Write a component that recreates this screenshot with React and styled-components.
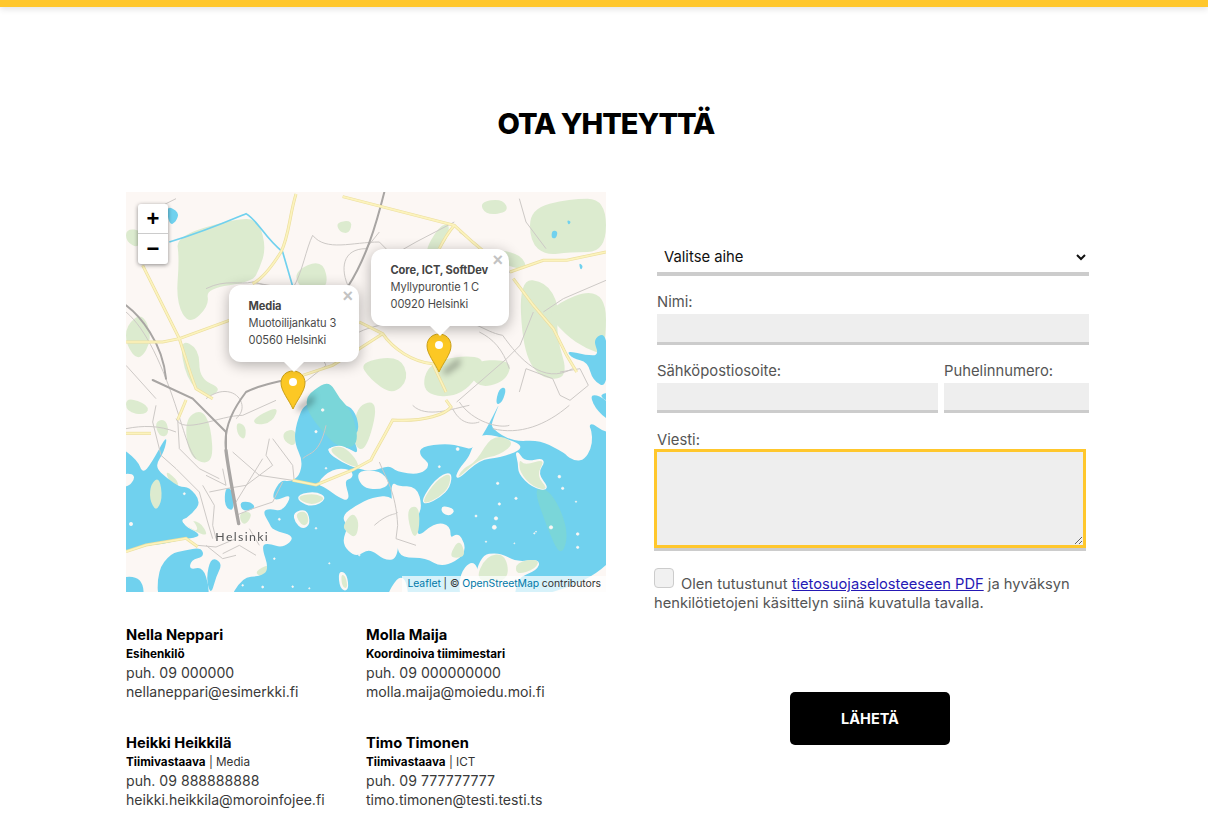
import React from 'react';
import styled, { createGlobalStyle } from 'styled-components';

const GlobalStyle = createGlobalStyle`
  * { box-sizing: border-box; }
  html, body { margin: 0; padding: 0; background: #fff; }
  body { font-family: Inter, "Liberation Sans", sans-serif; color: #4a4a4a; }
`;

const TopBar = styled.div`
  height: 7px;
  background: #ffc72c;
  box-shadow: 0 2px 6px rgba(0, 0, 0, 0.12);
`;

const Page = styled.main`
  width: 963px;
  margin-left: 126px;
`;

const Title = styled.h1`
  margin: 98px 0 49px;
  width: 960px;
  text-align: center;
  font-size: 29px;
  line-height: 38px;
  font-weight: 800;
  letter-spacing: -1px;
  color: #000;
`;

const Columns = styled.div`
  display: grid;
  grid-template-columns: 480px 435px;
  column-gap: 48px;
`;

const MapBox = styled.div`
  position: relative;
  width: 480px;
  height: 400px;
  overflow: hidden;
  background: #fcf7f4;
`;

const MapArt = styled.svg`
  display: block;
  width: 480px;
  height: 400px;
  filter: blur(0.35px);
`;

const Zoom = styled.div`
  position: absolute;
  left: 12px;
  top: 12px;
  width: 30px;
  border-radius: 3px;
  background: #fff;
  box-shadow: 0 1px 4px rgba(0, 0, 0, 0.45);
`;

const ZoomBtn = styled.div`
  height: 30px;
  display: flex;
  align-items: center;
  justify-content: center;
  font: bold 22px "Liberation Sans", sans-serif;
  color: #000;
  border-bottom: ${p => (p.$last ? 'none' : '1px solid #ccc')};
`;

const Popup = styled.div`
  position: absolute;
  left: ${p => p.$x}px;
  top: ${p => p.$y}px;
  width: ${p => p.$w}px;
  height: 77px;
  padding: 13px 0 0 19.5px;
  background: #fff;
  border-radius: 12px;
  box-shadow: 0 3px 14px rgba(0, 0, 0, 0.3);
  font-size: 11.1px;
  line-height: 17px;
  color: #4a4a4a;
  letter-spacing: -0.1px;
  &::after {
    content: '';
    position: absolute;
    left: 50%;
    bottom: -10px;
    margin-left: -11px;
    border-left: 11px solid transparent;
    border-right: 11px solid transparent;
    border-top: 11px solid #fff;
  }
`;

const PopupName = styled.b`
  display: block;
  font-weight: 700;
  color: #444;
`;

const PopupClose = styled.span`
  position: absolute;
  top: 3px;
  right: 6px;
  font: bold 18px/17px "Liberation Sans", sans-serif;
  color: #c3c3c3;
`;

const Pin = styled.svg`
  position: absolute;
  left: ${p => p.$x}px;
  top: ${p => p.$y}px;
  overflow: visible;
`;

const Attribution = styled.div`
  position: absolute;
  right: 0;
  bottom: 0;
  padding: 0 5px;
  height: 16px;
  background: rgba(255, 255, 255, 0.72);
  font-size: 10.4px;
  line-height: 16px;
  color: #333;
  letter-spacing: -0.05px;
  white-space: nowrap;
`;

const MapLink = styled.span`
  color: #0078a8;
`;

const Contacts = styled.div`
  display: grid;
  grid-template-columns: 240px 240px;
  grid-auto-rows: 108px;
  margin-top: 34px;
`;

const Contact = styled.div`
  font-size: 14.1px;
  line-height: 19px;
  color: #3a3a3a;
`;

const Name = styled.div`
  font-size: 14.7px;
  line-height: 18px;
  font-weight: 700;
  color: #000;
`;

const Role = styled.div`
  font-size: 11.7px;
  line-height: 19px;
  padding-top: 1px;
  margin-bottom: -1px;
  color: #333;
  b { font-weight: 700; color: #000; }
`;

const Form = styled.form`
  padding-top: 46px;
`;

const Select = styled.select`
  display: block;
  width: 432px;
  height: 38px;
  margin-left: 3px;
  padding: 4px 3px 0;
  border: none;
  border-bottom: 4px solid #ccc;
  background: #fff;
  font: 14.8px Inter, sans-serif;
  color: #111;
`;

const Label = styled.label`
  display: block;
  font-size: 14.8px;
  line-height: 18px;
  color: #555;
  margin-left: 3px;
`;

const Field = styled.div`
  margin-top: ${p => p.$top || 0}px;
  width: ${p => (p.$w ? `${p.$w}px` : 'auto')};
`;

const Input = styled.input`
  display: block;
  width: ${p => (p.$wide ? '432px' : '100%')};
  margin: 3px 0 0 3px;
  height: ${p => p.$h}px;
  padding: 0 8px;
  border: none;
  border-bottom: 3px solid #ccc;
  background: #eee;
  outline: none;
`;

const Pair = styled.div`
  display: flex;
  gap: 6px;
  margin-top: 17px;
`;

const Message = styled.textarea`
  display: block;
  width: 432px;
  height: 99px;
  margin: 0;
  padding: 6px;
  border: 3px solid #ffc72c;
  background: #eee;
  box-shadow: 0 3px 0 #ccc;
  outline: none;
`;

const Consent = styled.p`
  margin: 20px 0 0;
  width: 425px;
  font-size: 14.7px;
  line-height: 19px;
  color: #555;
  a { color: #2518b5; text-decoration: underline; }
`;

const Check = styled.input`
  appearance: none;
  width: 20px;
  height: 20px;
  margin: 0 7px 0 0;
  vertical-align: 1px;
  background: #f1f1f1;
  border: 1px solid #ccc;
  border-radius: 4px;
`;

const SendRow = styled.div`
  display: flex;
  justify-content: center;
  margin-top: 79px;
  width: 432px;
`;

const Send = styled.button`
  width: 160px;
  height: 53px;
  border: none;
  border-radius: 5px;
  background: #000;
  color: #fff;
  font: 700 14.5px Inter, sans-serif;
`;

// rounds a point list into a soft outline, coastlines look too sharp otherwise
const smooth = pts => {
  const n = pts.match(/-?\d+(\.\d+)?/g).map(Number);
  const p = [];
  for (let i = 0; i < n.length; i += 2) p.push([n[i], n[i + 1]]);
  const mid = (a, b) => `${(a[0] + b[0]) / 2} ${(a[1] + b[1]) / 2}`;
  let d = `M${mid(p[p.length - 1], p[0])}`;
  p.forEach((pt, i) => {
    d += ` Q${pt[0]} ${pt[1]} ${mid(pt, p[(i + 1) % p.length])}`;
  });
  return d + 'Z';
};

/* all map shapes are in 3x pixels, viewBox is 1440x1200 */
const SEA = [
  '-30 755 35 805 50 845 75 815 125 725 115 779 85 824 125 860 160 885 190 885 225 929 200 964 160 994 235 1032 170 1042 110 1056 50 1062 -30 1085',
  '-30 1154 50 1154 55 1240 -30 1240',
  '95 1134 135 1084 175 1076 225 1066 235 1094 195 1104 190 1134 230 1124 250 1184 245 1240 95 1240',
  '255 1094 290 1114 270 1154 255 1210 240 1160',
  '298 884 320 894 325 959 295 944',
  '340 929 375 929 390 949 350 959',
  '540 624 510 694 505 754 530 804 520 854 490 869 465 864 440 904 445 929 500 904 470 959 430 949 410 959 430 994 440 1014 510 1034 470 1069 430 1054 405 1059 430 1134 400 1154 350 1154 300 1240 1500 1240 1500 724 1440 724 1385 684 1400 754 1365 814 1300 774 1240 744 1160 749 1095 709 1100 684 1125 624 1080 714 1040 774 1010 764 960 754 885 764 880 789 915 819 880 849 810 839 790 819 740 839 690 829 640 804 600 774 620 764 660 764 700 789 680 734 700 714 690 664 660 634',
  '1390 610 1420 610 1470 650 1470 700 1415 660',
];

const TEAL = [
  '540 620 560 596 610 565 640 620 680 660 700 760 640 770 590 720 545 660',
  '1220 880 1280 900 1330 1020 1305 1100 1260 1000',
];

const ISLANDS = [
  '800 874 815 886 870 886 885 944 870 974 870 1044 930 994 970 1004 970 1044 1000 1024 1020 1084 950 1124 900 1094 830 1094 815 1064 800 924',
  '700 839 760 839 790 874 760 889 720 886 700 864',
  '650 974 690 944 740 919 800 914 812 974 815 1094 780 1104 730 1064 690 1094 650 1054 670 1004',
  '520 909 570 902 600 919 560 942 520 926',
  '505 964 540 954 550 994 530 1009 510 989',
  '600 774 650 759 690 799 700 829 650 809',
  '575 874 620 834 670 834 680 854 650 864 670 924 640 914 600 884',
  '1040 774 1060 724 1160 749 1190 769 1120 794 1060 799 990 864 1000 834 1030 799',
  '1170 774 1195 814 1260 799 1230 844 1270 894 1220 884 1180 844 1180 814',
  '890 924 930 864 975 839 970 884 940 914 900 934',
  '950 944 985 954 970 969 950 959',
  '1040 1240 1060 1094 1120 1084 1170 1114 1240 1104 1230 1134 1170 1154 1160 1240',
  '1000 1154 1040 1104 1060 1154 1040 1240 1010 1240',
  '770 1240 830 1134 850 1240',
  '640 1139 660 1149 665 1194 645 1189',
  '1300 674 1385 684 1400 754 1365 814 1300 774',
  '-20 849 30 849 0 889',
  '165 985 195 980 215 1015 195 1005',
];

const SPECKS = [
  [995, 771, 9], [940, 824, 6], [1115, 874, 7], [1120, 936, 7], [1170, 919, 7], [1310, 889, 7],
  [1105, 1006, 12], [1050, 972, 6], [1110, 979, 10], [1275, 1006, 10], [1355, 1026, 8], [1355, 1066, 7],
  [1225, 1024, 4], [965, 956, 11], [570, 719, 7], [600, 829, 5], [590, 654, 8], [175, 905, 6],
  [460, 982, 6], [1080, 1049, 4], [1300, 854, 8], [550, 1189, 4], [610, 1114, 4], [700, 1089, 5],
  [1165, 1054, 3], [1230, 1019, 3], [1350, 929, 4], [570, 1009, 5], [500, 1184, 5], [15, 996, 10],
  [350, 1180, 5], [410, 1185, 6], [445, 1100, 5],
];

const LAND_GREENS = [
  '150 130 350 75 400 90 420 170 400 230 380 270 240 290 250 340 190 400 150 330 160 200',
  '1212 50 1330 20 1440 20 1440 180 1330 180 1260 190 1212 150',
  '0 110 50 115 40 170 0 150',
  '1060 170 1180 180 1210 240 1110 210',
  '700 510 820 490 850 560 800 610 730 560',
  '1180 260 1260 270 1300 340 1290 430 1330 560 1240 560 1190 470',
  '1250 350 1440 275 1440 490 1380 470 1320 430',
  '160 440 220 470 220 560 290 590 240 620 180 560',
  '1020 510 1160 500 1140 570 1050 590',
  '630 90 680 85 670 125 640 120',
  '900 520 1000 490 1090 500 1010 615 890 610',
  '0 400 50 360 80 440 40 510 0 460',
  '500 240 590 200 610 290 530 300',
  '890 190 940 100 975 95 955 165',
  '1060 30 1130 20 1150 60 1080 70',
  '690 640 760 625 720 780 680 760',
  '175 684 225 650 255 700 262 820 190 800',
  '85 690 120 680 130 730 100 735',
  '0 614 70 640 60 670 0 660',
  '380 680 460 640 440 690 390 700',
  '330 690 360 700 358 745 335 730',
  '120 835 160 870 150 890 125 860',
  '340 960 380 960 365 995 345 995',
  '385 1140 430 1115 430 1140 405 1155',
  '470 720 510 710 510 765 475 750',
  '1310 690 1395 740 1370 800 1310 770',
  '170 990 220 985 250 1035 200 1015',
];

const ISLAND_GREENS = [
  '75 875 100 855 110 920 90 960 70 920',
  '605 770 650 760 690 800 700 830 650 810',
  '520 910 570 905 600 920 560 940 520 925',
  '505 965 540 955 550 990 530 1005',
  '890 925 930 865 975 840 970 885 940 915 900 935',
  '650 1000 680 960 700 990 690 1040 660 1020',
  '840 950 880 940 880 1020 860 1040',
  '970 1090 1000 1040 1020 1090 990 1100',
  '1045 1170 1080 1090 1140 1085 1150 1170',
  '1170 1110 1240 1100 1230 1130 1170 1150',
  '1180 800 1195 820 1260 800 1230 850 1270 895 1220 885 1180 840',
  '1050 810 1100 725 1170 750 1120 790 1060 800 990 865 1010 830',
  '645 1145 660 1155 665 1190 648 1185',
];

const PONDS = [
  '120 40 160 60 150 90 130 100',
  '1278 115 1296 118 1290 140 1276 138',
  '1322 84 1336 88 1328 100',
  '1358 212 1372 222 1364 236',
  '1400 440 1445 420 1445 590 1400 565 1385 510 1340 500 1320 475 1380 490 1420 490',
  '1118 590 1142 585 1130 630 1108 640',
  '1420 610 1445 600 1445 630',
];

const ROADS = [
  'M0 360 C60 410 110 520 155 660 C175 720 190 780 210 800',
  'M240 290 C300 260 340 280 380 270 C460 290 500 280 560 320',
  'M560 130 C600 180 680 150 760 150 L800 190 L870 150 L985 90',
  'M670 290 C640 230 650 170 720 170 L760 120',
  'M960 400 C1040 370 1070 420 1130 430 C1180 500 1250 580 1340 530',
  'M1252 360 L1312 320 L1440 265',
  'M1222 360 L1182 460 L1142 500 L992 630',
  'M1302 540 L1362 530 L1387 580 L1332 625 L1302 610 L1280 560 L1200 530 L1180 600',
  'M1000 120 C1070 170 1130 250 1160 240',
  'M0 520 L90 620',
  'M240 620 C320 560 380 640 330 680',
  'M380 270 L500 300 L540 400 L600 520 L500 600',
  'M700 420 C760 390 880 380 960 400',
  'M1060 420 C1100 440 1130 470 1150 530',
  'M560 130 C540 170 530 240 500 290 M540 400 L640 470 L700 420',
  'M150 680 C170 730 280 670 350 670 L450 625 M155 680 L160 770 L220 830 L280 860',
  'M90 640 L80 690 L105 790 L150 830 L220 900 L245 990 L260 1040',
  'M440 740 L500 820 L505 870 M430 740 L420 790 L440 820 L360 880 L300 890 L250 900',
  'M320 780 L400 850 L500 865 M240 850 L300 880 M230 880 L265 940 L260 1000 L270 1040',
  'M470 870 L440 930 L380 950 L330 970 M330 930 L410 800 M290 830 L300 880',
  'M0 710 C50 700 100 700 150 720',
  'M1100 710 C1180 730 1260 700 1330 640 M1000 630 C1040 690 1120 710 1150 700',
  'M760 810 C780 860 810 900 815 1000 L810 1040 L870 1060 M745 1000 C790 960 810 970 815 960',
  'M980 650 C1000 690 1030 700 1060 690 M215 1060 L270 1065 L330 1040 M240 1060 L290 1100 L330 1090',
  'M860 640 C900 680 980 650 1030 640 M600 700 C580 790 550 780 530 800',
  'M800 190 C790 280 830 300 880 280 M60 60 L110 40 L150 20 M1180 20 L1200 90 L1260 170',
  'M290 1085 L340 1060 L390 1090 M370 1010 L400 1060',
];

const MOTORWAYS = [
  'M510 6 C490 70 490 130 465 180 C440 220 410 260 380 275',
  'M650 14 L790 50 L985 100 L1040 150 L1070 175',
  'M985 100 C960 130 950 150 940 170',
  'M0 450 L110 450 L160 440 L310 385',
  'M50 220 C100 320 130 380 160 440 C180 500 190 540 210 590 L260 620',
  'M1152 240 L1252 205 L1322 205 L1440 180',
  'M1162 260 L1222 340 L1282 410 L1322 490 L1352 540',
  'M700 390 L770 425 C800 470 860 510 920 515 L960 600',
  'M770 425 L700 470 L620 520 L530 550',
  'M960 624 L975 645 C960 665 900 690 800 684 C760 760 740 790 735 804 L680 834 L570 879 L500 865',
  'M0 1079 L60 1059 L180 1039 L215 1064',
  'M155 684 L180 624',
  'M0 724 L75 724',
];

const RAILS = [
  'M775 0 C750 100 720 200 665 285',
  'M300 775 C305 820 320 900 338 995',
  'M300 775 C290 700 330 640 360 600 C400 580 450 570 520 555',
  'M80 564 L200 620 L300 720 L300 775',
  'M0 340 C40 370 110 450 120 560',
];

const MapPicture = () => (
  <MapArt viewBox="0 0 1440 1200" aria-hidden="true">
    <rect width="1440" height="1200" fill="#fcf7f4" />
    <g fill="#dcebcf">
      {LAND_GREENS.map((d, i) => <path key={i} d={smooth(d)} />)}
    </g>
    <g fill="#70d1ee">
      {SEA.map((d, i) => <path key={i} d={smooth(d)} />)}
    </g>
    <g fill="#7ad6d9">
      {TEAL.map((d, i) => <path key={i} d={smooth(d)} />)}
    </g>
    <g fill="#fcf7f4" stroke="#fcf7f4" strokeWidth="7" strokeLinejoin="round">
      {ISLANDS.map((d, i) => <path key={i} d={smooth(d)} />)}
      {SPECKS.map(([x, y, r], i) => <circle key={i} cx={x} cy={y} r={r * 0.5} strokeWidth="2" />)}
    </g>
    <g fill="#dcebcf">
      {ISLAND_GREENS.map((d, i) => <path key={i} d={smooth(d)} />)}
    </g>
    <g fill="#70d1ee">
      {PONDS.map((d, i) => <path key={i} d={smooth(d)} />)}
    </g>
    <path d="M130 150 C230 120 300 90 360 65 C400 90 410 130 470 180 L505 300" fill="none" stroke="#70d1ee" strokeWidth="5" />
    <g fill="none" stroke="#cdc9c6" strokeWidth="3">
      {ROADS.map((d, i) => <path key={i} d={d} />)}
    </g>
    <g fill="none" stroke="#a8a5a3" strokeLinecap="round">
      {RAILS.map((d, i) => <path key={i} d={d} strokeWidth={i === 1 ? 10 : 6} />)}
    </g>
    <g fill="none" stroke="#ecdf9f" strokeWidth="9">
      {MOTORWAYS.map((d, i) => <path key={i} d={d} />)}
    </g>
    <g fill="none" stroke="#fcf3bd" strokeWidth="5">
      {MOTORWAYS.map((d, i) => <path key={i} d={d} />)}
    </g>
    <text x="268" y="1048" fontFamily="Lato, sans-serif" fontSize="37" letterSpacing="4" fill="#555" stroke="#fff" strokeWidth="1" paintOrder="stroke">Helsinki</text>
  </MapArt>
);

const Marker = ({ x, y }) => (
  <Pin $x={x} $y={y} width="26" height="40" viewBox="0 0 26 40">
    <path d="M16 38 L34 24 L34 32 L20 42Z" fill="rgba(0,0,0,0.3)" style={{ filter: 'blur(3px)' }} />
    <path d="M13 1 C6 1 1 6 1 13 C1 21 9 30 13 39 C17 30 25 21 25 13 C25 6 20 1 13 1Z" fill="#fcc824" stroke="#caa017" strokeWidth="1" />
    <circle cx="13" cy="12" r="4" fill="#fff" />
  </Pin>
);

const people = [
  { name: 'Nella Neppari', role: 'Esihenkilö', phone: 'puh. 09 000000', mail: 'nellaneppari@esimerkki.fi' },
  { name: 'Molla Maija', role: 'Koordinoiva tiimimestari', phone: 'puh. 09 000000000', mail: 'molla.maija@moiedu.moi.fi' },
  { name: 'Heikki Heikkilä', role: 'Tiimivastaava', team: 'Media', phone: 'puh. 09 888888888', mail: 'heikki.heikkila@moroinfojee.fi' },
  { name: 'Timo Timonen', role: 'Tiimivastaava', team: 'ICT', phone: 'puh. 09 777777777', mail: 'timo.timonen@testi.testi.ts' },
];

export default function App() {
  return (
    <>
      <GlobalStyle />
      <TopBar />
      <Page>
        <Title>OTA YHTEYTTÄ</Title>
        <Columns>
          <div>
            <MapBox>
              <MapPicture />
              <Zoom>
                <ZoomBtn>+</ZoomBtn>
                <ZoomBtn $last>−</ZoomBtn>
              </Zoom>
              <Marker x={154} y={178} />
              <Marker x={300} y={141} />
              <Popup $x={103} $y={93} $w={130}>
                <PopupClose>×</PopupClose>
                <PopupName>Media</PopupName>
                Muotoilijankatu 3<br />
                00560 Helsinki
              </Popup>
              <Popup $x={245} $y={57} $w={138}>
                <PopupClose>×</PopupClose>
                <PopupName>Core, ICT, SoftDev</PopupName>
                Myllypurontie 1 C<br />
                00920 Helsinki
              </Popup>
              <Attribution>
                <MapLink>Leaflet</MapLink> | © <MapLink>OpenStreetMap</MapLink> contributors
              </Attribution>
            </MapBox>
            <Contacts>
              {people.map(p => (
                <Contact key={p.name}>
                  <Name>{p.name}</Name>
                  <Role>
                    <b>{p.role}</b>
                    {p.team ? ` | ${p.team}` : ''}
                  </Role>
                  <div>{p.phone}</div>
                  <div>{p.mail}</div>
                </Contact>
              ))}
            </Contacts>
          </div>
          <Form onSubmit={e => e.preventDefault()}>
            <Select defaultValue="">
              <option value="">Valitse aihe</option>
            </Select>
            <Field $top={17}>
              <Label>Nimi:</Label>
              <Input $h={31} $wide />
            </Field>
            <Pair>
              <Field $w={281}>
                <Label>Sähköpostiosoite:</Label>
                <Input $h={30} />
              </Field>
              <Field $w={145}>
                <Label>Puhelinnumero:</Label>
                <Input $h={30} />
              </Field>
            </Pair>
            <Field $top={18}>
              <Label>Viesti:</Label>
              <Message />
            </Field>
            <Consent>
              <Check type="checkbox" />
              Olen tutustunut <a href="#pdf">tietosuojaselosteeseen PDF</a> ja hyväksyn henkilötietojeni käsittelyn siinä kuvatulla tavalla.
            </Consent>
            <SendRow>
              <Send type="submit">LÄHETÄ</Send>
            </SendRow>
          </Form>
        </Columns>
      </Page>
    </>
  );
}
